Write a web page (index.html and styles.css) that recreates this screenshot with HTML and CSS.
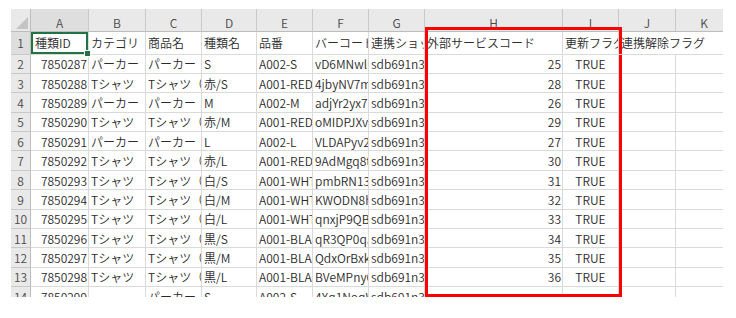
FILE: index.html
```html
<!DOCTYPE html>
<html lang="ja">
<head>
    <meta charset="UTF-8">
    <title>Sheet1</title>
    <link rel="stylesheet" href="styles.css">
</head>
<body>
    <div class="page">
        <!-- worksheet grid -->
        <div class="sheet">
            <div class="c corner"></div><div class="c hd hd-sel">A</div><div class="c hd">B</div><div class="c hd">C</div><div class="c hd">D</div><div class="c hd">E</div><div class="c hd">F</div><div class="c hd">G</div><div class="c hd">H</div><div class="c hd">I</div><div class="c hd">J</div><div class="c hd">K</div>

            <div class="c rh rh-sel">1</div><div class="c sel">種類ID</div><div class="c">カテゴリ</div><div class="c">商品名</div><div class="c">種類名</div><div class="c">品番</div><div class="c">バーコード</div><div class="c">連携ショップID</div><div class="c">外部サービスコード</div><div class="c">更新フラグ</div><div class="c spill">連携解除フラグ</div><div class="c"></div>

            <div class="c rh">2</div><div class="c num">7850287</div><div class="c">パーカー</div><div class="c">パーカー</div><div class="c">S</div><div class="c">A002-S</div><div class="c">vD6MNwlK2q</div><div class="c">sdb691n3xk</div><div class="c num">25</div><div class="c ctr">TRUE</div><div class="c"></div><div class="c"></div>
            <div class="c rh">3</div><div class="c num">7850288</div><div class="c">Tシャツ</div><div class="c">Tシャツ（赤/S）</div><div class="c">赤/S</div><div class="c">A001-RED-S</div><div class="c">4jbyNV7mQ0</div><div class="c">sdb691n3xk</div><div class="c num">28</div><div class="c ctr">TRUE</div><div class="c"></div><div class="c"></div>
            <div class="c rh">4</div><div class="c num">7850289</div><div class="c">パーカー</div><div class="c">パーカー</div><div class="c">M</div><div class="c">A002-M</div><div class="c">adjYr2yx7P</div><div class="c">sdb691n3xk</div><div class="c num">26</div><div class="c ctr">TRUE</div><div class="c"></div><div class="c"></div>
            <div class="c rh">5</div><div class="c num">7850290</div><div class="c">Tシャツ</div><div class="c">Tシャツ（赤/M）</div><div class="c">赤/M</div><div class="c">A001-RED-M</div><div class="c">oMIDPJXv3s</div><div class="c">sdb691n3xk</div><div class="c num">29</div><div class="c ctr">TRUE</div><div class="c"></div><div class="c"></div>
            <div class="c rh">6</div><div class="c num">7850291</div><div class="c">パーカー</div><div class="c">パーカー</div><div class="c">L</div><div class="c">A002-L</div><div class="c">VLDAPyv2cR</div><div class="c">sdb691n3xk</div><div class="c num">27</div><div class="c ctr">TRUE</div><div class="c"></div><div class="c"></div>
            <div class="c rh">7</div><div class="c num">7850292</div><div class="c">Tシャツ</div><div class="c">Tシャツ（赤/L）</div><div class="c">赤/L</div><div class="c">A001-RED-L</div><div class="c">9AdMgq8tW1</div><div class="c">sdb691n3xk</div><div class="c num">30</div><div class="c ctr">TRUE</div><div class="c"></div><div class="c"></div>
            <div class="c rh">8</div><div class="c num">7850293</div><div class="c">Tシャツ</div><div class="c">Tシャツ（白/S）</div><div class="c">白/S</div><div class="c">A001-WHT-S</div><div class="c">pmbRN13eZa</div><div class="c">sdb691n3xk</div><div class="c num">31</div><div class="c ctr">TRUE</div><div class="c"></div><div class="c"></div>
            <div class="c rh">9</div><div class="c num">7850294</div><div class="c">Tシャツ</div><div class="c">Tシャツ（白/M）</div><div class="c">白/M</div><div class="c">A001-WHT-M</div><div class="c">KWODN8hf4L</div><div class="c">sdb691n3xk</div><div class="c num">32</div><div class="c ctr">TRUE</div><div class="c"></div><div class="c"></div>
            <div class="c rh">10</div><div class="c num">7850295</div><div class="c">Tシャツ</div><div class="c">Tシャツ（白/L）</div><div class="c">白/L</div><div class="c">A001-WHT-L</div><div class="c">qnxjP9QBu7</div><div class="c">sdb691n3xk</div><div class="c num">33</div><div class="c ctr">TRUE</div><div class="c"></div><div class="c"></div>
            <div class="c rh">11</div><div class="c num">7850296</div><div class="c">Tシャツ</div><div class="c">Tシャツ（黒/S）</div><div class="c">黒/S</div><div class="c">A001-BLACK-S</div><div class="c">qR3QP0qJz5</div><div class="c">sdb691n3xk</div><div class="c num">34</div><div class="c ctr">TRUE</div><div class="c"></div><div class="c"></div>
            <div class="c rh">12</div><div class="c num">7850297</div><div class="c">Tシャツ</div><div class="c">Tシャツ（黒/M）</div><div class="c">黒/M</div><div class="c">A001-BLACK-M</div><div class="c">QdxOrBxk8n</div><div class="c">sdb691n3xk</div><div class="c num">35</div><div class="c ctr">TRUE</div><div class="c"></div><div class="c"></div>
            <div class="c rh">13</div><div class="c num">7850298</div><div class="c">Tシャツ</div><div class="c">Tシャツ（黒/L）</div><div class="c">黒/L</div><div class="c">A001-BLACK-L</div><div class="c">BVeMPny6Gd</div><div class="c">sdb691n3xk</div><div class="c num">36</div><div class="c ctr">TRUE</div><div class="c"></div><div class="c"></div>
            <div class="c rh">14</div><div class="c num">7850299</div><div class="c"></div><div class="c">パーカー</div><div class="c">S</div><div class="c">A002-S</div><div class="c">4Xq1NoqW8e</div><div class="c">sdb691n3xk</div><div class="c num"></div><div class="c ctr"></div><div class="c"></div><div class="c"></div>
        </div>

        <!-- highlight box -->
        <div class="mark"></div>
    </div>
</body>
</html>
```

FILE: styles.css
```css
body {
    margin: 0;
    background-color: #fff;
    font-family: "Noto Sans CJK JP", "Liberation Sans", sans-serif;
    font-size: 12px;
    font-weight: 350;
    color: #2b2b2b;
}
.page {
    position: relative;
    width: 736px;
    height: 318px;
    padding: 9px 0 0 11px;
    box-sizing: border-box;
}
.sheet {
    display: grid;
    grid-template-columns: 20px 58px 57px 56px 55px 56px 56px 56px 138px 56px 57px 57px;
    grid-template-rows: 23px 22.5px repeat(13, 19.4px);
    width: 712px;
    height: 288px;
    overflow: hidden;
    background-color: #fff;
}
.c {
    display: flex;
    align-items: center;
    padding: 0 2px;
    box-sizing: border-box;
    border-right: 1px solid #dadada;
    border-bottom: 1px solid #dadada;
    white-space: nowrap;
    overflow: hidden;
    min-width: 0;
}
.num {
    justify-content: flex-end;
    padding-right: 1px;
}
.ctr {
    justify-content: center;
}
.hd {
    justify-content: center;
    padding-top: 5px;
    background-color: #e9e9e9;
    border-right-color: #c9c9c9;
    border-bottom-color: #bdbdbd;
    color: #4a4a4a;
}
.hd-sel {
    background-color: #dedede;
}
.rh {
    justify-content: center;
    padding: 0;
    background-color: #e9e9e9;
    border-right-color: #bdbdbd;
    border-bottom-color: #c9c9c9;
    color: #4a4a4a;
}
.rh-sel {
    background-color: #dedede;
}
.corner {
    position: relative;
    background-color: #e9e9e9;
    border-right-color: #bdbdbd;
    border-bottom-color: #bdbdbd;
}
.corner::after {
    content: "";
    position: absolute;
    right: 2px;
    bottom: 2px;
    width: 12px;
    height: 12px;
    background-color: #c4c4c4;
    clip-path: polygon(100% 0, 100% 100%, 0 100%);
}
.sel {
    position: relative;
    overflow: visible;
    padding-left: 4px;
    box-shadow: inset 0 0 0 2px #217346;
}
.sel::after {
    content: "";
    position: absolute;
    right: -3px;
    bottom: -3px;
    width: 5px;
    height: 5px;
    background-color: #217346;
    border: 1px solid #fff;
    z-index: 2;
}
.spill {
    overflow: visible;
    border-right: none;
    position: relative;
    z-index: 1;
}
.mark {
    position: absolute;
    left: 425px;
    top: 27px;
    width: 197px;
    height: 270px;
    border: 3px solid #ff0000;
    box-sizing: border-box;
}
```
